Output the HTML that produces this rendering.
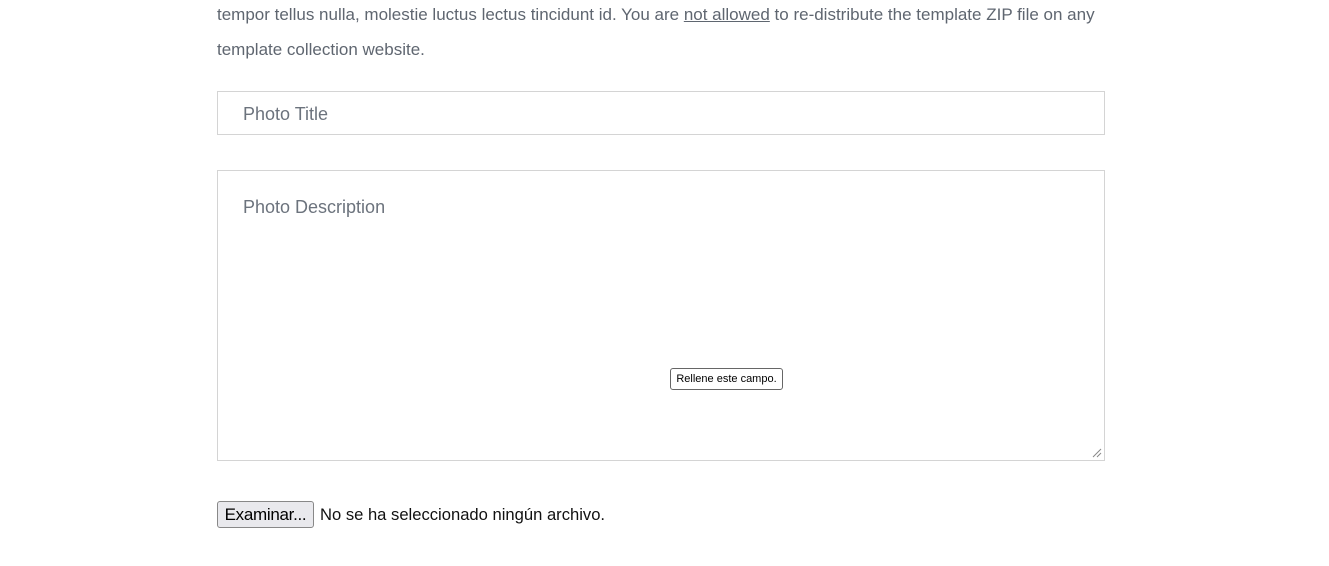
<!DOCTYPE html>
<html><head><meta charset="utf-8"><style>
body{margin:0;width:1329px;height:566px;background:#fff;position:relative;overflow:hidden;font-family:"Liberation Sans",sans-serif;}
.t{position:absolute;left:217px;white-space:nowrap;color:#5f6670;font-size:17px;letter-spacing:0}
.box{position:absolute;left:217px;width:886px;border:1px solid #d4d4d4;background:#fff}
.ph{position:absolute;left:25px;color:#6c737d;font-size:18px;letter-spacing:0}
</style></head><body>
<div class="t" style="top:5px">tempor tellus nulla, molestie luctus lectus tincidunt id. You are <u>not allowed</u> to re-distribute the template ZIP file on any</div>
<div class="t" style="top:40px">template collection website.</div>
<div class="box" style="top:91px;height:42px"><span class="ph" style="top:12px">Photo Title</span></div>
<div class="box" style="top:170px;height:289px"><span class="ph" style="top:26px">Photo Description</span>
<svg style="position:absolute;right:2px;bottom:2px" width="12" height="12"><path d="M11 3L3 11M11 7L7 11" stroke="#888" stroke-width="1"/></svg></div>
<div style="position:absolute;left:670px;top:368px;width:111px;height:20px;border:1px solid #666;border-radius:3px;background:#fff;font-size:11px;line-height:20px;text-align:center;color:#000">Rellene este campo.</div>
<div style="position:absolute;left:217px;top:501px;width:95px;height:25px;border:1px solid #888;border-radius:3px;background:#e9e9ed;font-size:17px;line-height:25px;text-align:center;color:#000;letter-spacing:-0.3px">Examinar...</div>
<div style="position:absolute;left:320px;top:505px;font-size:16.6px;color:#111">No se ha seleccionado ningún archivo.</div>
</body></html>
